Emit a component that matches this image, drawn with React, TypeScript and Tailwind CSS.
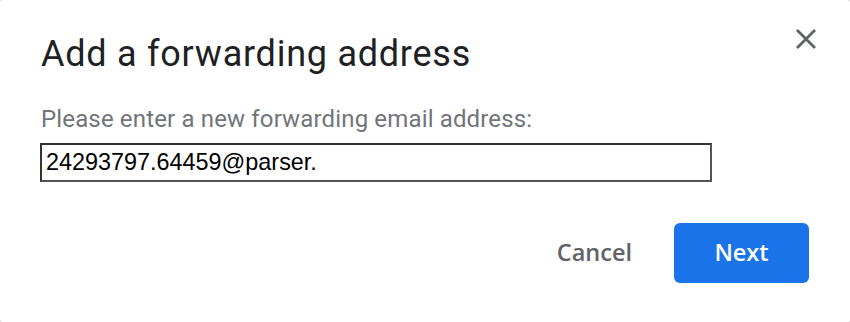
export default function App() {
  return (
    <div className="w-[850px] h-[322px] bg-[#d9d9d9]">
      <div className="w-full h-full bg-white rounded-[3px] flex flex-col" style={{ fontFamily: "Roboto, 'Noto Sans', sans-serif" }}>
        {/* Header */}
        <div className="flex items-start justify-between pl-[41px] pr-[33px] pt-[34px]">
          <h1 className="text-[36px] leading-[40px] text-[#202124] tracking-[0.75px]">Add a forwarding address</h1>
          <button className="-mt-[6px] text-[#5f6368]" aria-label="Close">
            <svg width="22" height="22" viewBox="0 0 22 22" fill="none" stroke="currentColor" strokeWidth="2.8" strokeLinecap="butt">
              <path d="M2 2 L20 20 M20 2 L2 20" />
            </svg>
          </button>
        </div>

        {/* Body */}
        <div className="pl-[40px] pt-[31px]">
          <label className="block pl-[1px] text-[24px] leading-[28px] text-[#70757a] tracking-[0.15px]">
            Please enter a new forwarding email address:
          </label>
          <input
            defaultValue="24293797.64459@parser."
            className="mt-[10px] block w-[672px] h-[39px] border-2 border-t-[#333] border-l-[#333] border-b-[#555] border-r-[#555] px-[4px] text-[23.4px] text-black outline-none"
            style={{ fontFamily: "'Liberation Sans', Arial, sans-serif" }}
          />
        </div>

        {/* Footer */}
        <div className="flex justify-end items-center gap-[42px] pr-[41px] pt-[41px]" style={{ fontFamily: "'Open Sans', Roboto, sans-serif" }}>
          <button className="text-[23.5px] font-semibold text-[#5f6368]">Cancel</button>
          <button className="w-[135px] h-[60px] rounded-[6px] bg-[#1a73e8] text-white text-[23.5px] font-semibold">
            Next
          </button>
        </div>
      </div>
    </div>
  );
}
